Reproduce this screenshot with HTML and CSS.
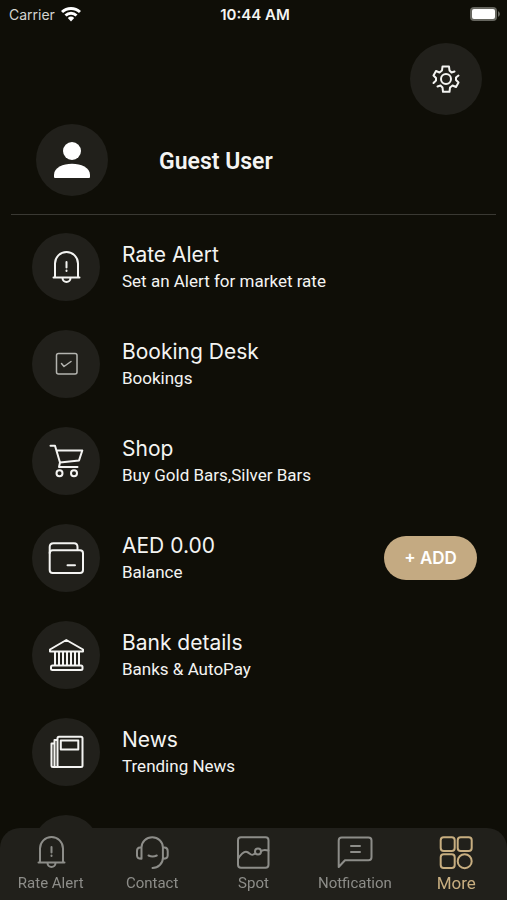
FILE: index.html
```html
<!DOCTYPE html>
<html lang="en">
<head>
<meta charset="utf-8">
<meta name="viewport" content="width=device-width, initial-scale=1">
<title>More</title>
<link rel="stylesheet" href="styles.css">
</head>
<body>
<svg class="sprite" aria-hidden="true">
  <symbol id="bell" viewBox="0 0 40 40">
    <path d="M9 30V16.500a11.500 11.500 0 0 1 23 0V30M7.500 30.500h26M16.500 31a4 4 0 0 0 8 0M20.500 15v5.500M20.500 23.500v0.500"/>
  </symbol>
</svg>
<header class="status">
  <span class="carrier">Carrier
    <svg class="wifi" viewBox="0 0 20 16" aria-hidden="true"><path d="M1 6a13 13 0 0 1 18 0M4.500 9.500a8 8 0 0 1 11 0"/><path class="solid" d="M6.800 12a4.800 4.800 0 0 1 6.400 0L10 15.500z"/></svg>
  </span>
  <span class="time">10:44 AM</span>
  <svg class="battery" viewBox="0 0 32 16" aria-hidden="true"><rect class="shell" x="1" y="1" width="27" height="14" rx="4"/><rect class="charge" x="3" y="3" width="23" height="10" rx="2"/><path class="shell" d="M29 5q4 3 0 6z"/></svg>
</header>
<main>
  <div class="toolbar">
    <button class="round large" type="button" aria-label="Settings">
      <svg class="icon" viewBox="0 0 40 40"><circle cx="20" cy="20" r="5"/><path d="M28.500 12.500L25.500 13.500L23.500 11.500L23 7.500H16.500L16 11.500L13.500 13.500L10 12L7.500 16.500L10 19V21.500L7.500 24M11.500 27.500L14.500 26.500L16.500 28.500L17 32.800H23.500L24 28.500L26.500 26.500L30 28L32.500 23.500L30 21V18.500L32.500 16.500"/></svg>
    </button>
  </div>
  <section class="profile">
    <span class="round large"><svg class="icon person" viewBox="0 0 40 40" aria-hidden="true"><circle cx="20" cy="11" r="9"/><path d="M2 35v2q0 1 1 1h34q1 0 1-1v-2C38 20 2 20 2 35z"/></svg></span>
    <h1>Guest User</h1>
  </section>
  <ul class="menu">
    <li><a href="#alert"><span class="round"><svg class="icon"><use href="#bell"/></svg></span><span class="text"><strong>Rate Alert</strong><small>Set an Alert for market rate</small></span></a></li>
    <li><a href="#booking"><span class="round"><svg class="icon thin" viewBox="0 0 40 40"><rect x="10.500" y="9.500" width="20.500" height="20.500" rx="2"/><path d="M15.500 19.500l2.500 3 7-5"/></svg></span><span class="text"><strong>Booking Desk</strong><small>Bookings</small></span></a></li>
    <li><a href="#shop"><span class="round"><svg class="icon" viewBox="0 0 40 40"><path d="M4.500 4.700H9L14 21.500L33 19.500L36.300 9.500H10.500M14 21.500L13 26H31.500"/><circle cx="13.500" cy="32.300" r="3"/><circle cx="28" cy="32.300" r="3"/></svg></span><span class="text"><strong>Shop</strong><small>Buy Gold Bars,Silver Bars</small></span></a></li>
    <li><a href="#balance"><span class="round"><svg class="icon" viewBox="0 0 40 40"><rect x="3.700" y="12.300" width="33.300" height="22.700" rx="3"/><path d="M3.700 15V9Q3.700 5.300 7.500 5.300H28Q31.500 5.300 31.500 9V12M21.500 27.300H29"/></svg></span><span class="text"><strong>AED 0.00</strong><small>Balance</small></span></a><button class="add" type="button">+ ADD</button></li>
    <li><a href="#bank"><span class="round"><svg class="icon" viewBox="0 0 40 40"><path d="M20.300 5L4 14.500V16.500H37V14.500zM9 17v13M13 17v13M17 17v13M21 17v13M25 17v13M29 17v13M33 17v13"/><rect x="5" y="30.500" width="31.500" height="4.500" rx="1.500"/></svg></span><span class="text"><strong>Bank details</strong><small>Banks &amp; AutoPay</small></span></a></li>
    <li><a href="#news"><span class="round"><svg class="icon" viewBox="0 0 40 40"><rect x="11.500" y="4.700" width="25" height="30.300" rx="1.500"/><rect x="14.800" y="8.500" width="17.500" height="9"/><path d="M11 8H8.500V34M8 11.500H5.500V33.500Q5.500 35 7 35H12"/></svg></span><span class="text"><strong>News</strong><small>Trending News</small></span></a></li>
    <li><span class="round"></span></li>
  </ul>
</main>
<nav class="tabs">
  <a href="#alert"><svg class="icon"><use href="#bell"/></svg><span>Rate Alert</span></a>
  <a href="#contact"><svg class="icon" viewBox="0 0 40 40"><path d="M9.500 16V15.500a10.700 10.200 0 0 1 21.400 0V26A10.500 10 0 0 1 20.500 36M16.500 23.500q4 2 8.300 0M9.500 15.500H8Q5 15.500 5 19v4.500Q5 26.700 9.500 26.700zM31 15.500h1.500Q35.700 15.500 35.700 19v4.500q0 3.200-4.700 3.200"/></svg><span>Contact</span></a>
  <a href="#spot"><svg class="icon" viewBox="0 0 40 40"><rect x="5" y="5.300" width="30.500" height="30.400" rx="3"/><path d="M5 27C8 22 11 19 14 20S18 25 22 21.500M28 19.500Q30 17 35.500 18.500"/><circle cx="25" cy="19.500" r="3"/></svg><span>Spot</span></a>
  <a href="#notification"><svg class="icon" viewBox="0 0 40 40"><path d="M3.700 35V8.500Q3.700 5.500 6.700 5.500H33.500Q36.500 5.500 36.500 8.500V25.300Q36.500 28.300 33.500 28.300H10zM16 14h9M16 20h9"/></svg><span>Notfication</span></a>
  <a class="active" href="#more" aria-current="page"><svg class="icon" viewBox="0 0 40 40"><rect x="4.700" y="5.300" width="14" height="13.700" rx="3"/><rect x="21.700" y="5.300" width="14" height="13.700" rx="3"/><rect x="4.700" y="22.300" width="14" height="13.700" rx="3"/><circle cx="28.700" cy="29.200" r="7"/></svg><span>More</span></a>
</nav>
</body>
</html>
```

FILE: styles.css
```css
* { box-sizing: border-box; }
body {
  margin: 0;
  height: 100vh;
  overflow: hidden;
  background: #0f0e07;
  color: #f4f4f2;
  font-family: Roboto, "Liberation Sans", sans-serif;
}
a { color: inherit; text-decoration: none; }
button { border: 0; padding: 0; color: inherit; font: inherit; }
.sprite { display: none; }
.icon {
  width: 40px;
  height: 40px;
  fill: none;
  stroke: currentColor;
  stroke-width: 2;
  stroke-linejoin: round;
  stroke-linecap: round;
}
.thin { stroke-width: 1.5; color: #b4b4b0; }
.person { fill: #fff; stroke: none; }

.status {
  display: grid;
  grid-template-columns: 1fr auto 1fr;
  align-items: center;
  height: 28px;
  padding: 0 6px 0 9px;
  font: 14px Inter, sans-serif;
}
.carrier { display: flex; align-items: center; gap: 6px; color: #d4d4d0; }
.time { font-size: 15px; font-weight: 600; }
.wifi { width: 20px; height: 16px; fill: none; stroke: #fff; stroke-width: 3; }
.wifi .solid { fill: #fff; stroke: none; }
.battery { width: 32px; height: 16px; justify-self: end; }
.shell { fill: #66665f; }
.charge { fill: #fff; }

.round {
  display: flex;
  flex: none;
  align-items: center;
  justify-content: center;
  width: 68px;
  height: 68px;
  border-radius: 50%;
  background: #21201b;
}
.large { width: 72px; height: 72px; }
.toolbar { display: flex; justify-content: flex-end; padding: 15px 25px 9px; }
.profile {
  display: flex;
  align-items: center;
  gap: 51px;
  margin: 0 11px;
  padding: 0 25px 18px;
  border-bottom: 1px solid #3a3933;
}
h1 { margin: 0; padding-top: 4px; font-size: 23px; line-height: 28px; font-weight: 600; }

.menu {
  display: flex;
  flex-direction: column;
  gap: 29px;
  margin: 0;
  padding: 18px 30px 0 32px;
  list-style: none;
}
.menu li { display: flex; align-items: center; }
.menu a { display: flex; flex: 1; align-items: center; gap: 22px; }
.text { display: flex; flex-direction: column; padding-top: 2px; }
.text strong { font: 400 21px/26px Inter, sans-serif; }
.text small { font-size: 17px; line-height: 26px; }
.add {
  width: 93px;
  height: 44px;
  border-radius: 22px;
  background: #c4aa82;
  color: #fff;
  font: 600 17px Inter, sans-serif;
}

.tabs {
  position: fixed;
  inset: auto 0 0;
  display: grid;
  grid-template-columns: repeat(5, 1fr);
  height: 72px;
  padding-top: 4px;
  border-radius: 20px 20px 0 0;
  background: #21201b;
  color: #8d8d89;
}
.tabs a { display: flex; flex-direction: column; align-items: center; }
.tabs span { font-size: 15px; line-height: 22px; }
.tabs .active { color: #c8ae80; }
.tabs .active span { font-size: 17px; }
```
